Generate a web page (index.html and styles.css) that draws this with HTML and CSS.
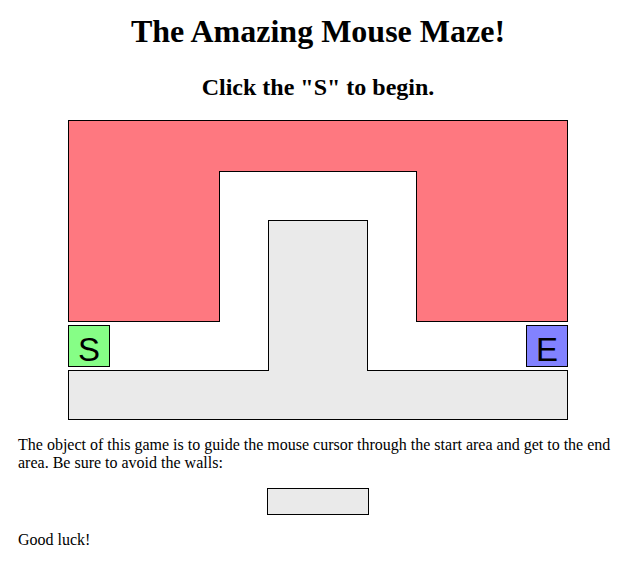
FILE: index.html
```html
<!DOCTYPE html>
<html lang="en">
<head>
<meta charset="utf-8">
<title>The Amazing Mouse Maze!</title>
<link rel="stylesheet" href="styles.css">
</head>
<body>
<h1 class="title">The Amazing Mouse Maze!</h1>
<h2 class="subtitle">Click the "S" to begin.</h2>
<div class="maze">
  <div class="wall wall-left youlose"></div>
  <div class="wall wall-right youlose"></div>
  <div class="wall wall-top youlose"></div>
  <div class="wall floor"></div>
  <div class="wall pillar"></div>
  <div class="marker start">S</div>
  <div class="marker end">E</div>
</div>
<p class="text">The object of this game is to guide the mouse cursor through the start area and get to the end area. Be sure to avoid the walls:</p>
<div class="example-wall"></div>
<p class="text">Good luck!</p>
</body>
</html>
```
FILE: styles.css
```css
body {
  margin: 0;
  padding: 0 18px;
  font-family: "Liberation Serif", "Times New Roman", serif;
  color: #000;
  background: #fff;
}

.title {
  text-align: center;
  font-size: 32px;
  margin: 13px 0 24px;
}

.subtitle {
  text-align: center;
  font-size: 24px;
  margin: 0 0 19px;
}

.maze {
  position: relative;
  width: 500px;
  height: 300px;
  margin: 0 auto;
}

.wall {
  position: absolute;
  border: 1px solid #000;
  background-color: #eaeaea;
}

.wall.youlose {
  background-color: #fe7880;
}

.wall-left {
  left: 0;
  top: 0;
  width: 150px;
  height: 200px;
}

.wall-right {
  left: 348px;
  top: 0;
  width: 150px;
  height: 200px;
}

.wall-top {
  left: 151px;
  top: 0;
  width: 198px;
  height: 50px;
  border-left: none;
  border-right: none;
}

.floor {
  left: 0;
  top: 250px;
  width: 498px;
  height: 48px;
}

.pillar {
  left: 200px;
  top: 100px;
  width: 98px;
  height: 150px;
  border-bottom: none;
}

.marker {
  position: absolute;
  top: 205px;
  width: 40px;
  height: 40px;
  border: 1px solid #000;
  font-family: "Liberation Sans", Arial, sans-serif;
  font-size: 33px;
  line-height: 48px;
  text-align: center;
  overflow: visible;
}

.start {
  left: 0;
  background-color: #86fe86;
}

.end {
  left: 458px;
  background-color: #8282ff;
}

.text {
  font-size: 16px;
  margin: 16px 0;
}

.example-wall {
  width: 100px;
  height: 25px;
  margin: 0 auto;
  border: 1px solid #000;
  background-color: #eaeaea;
}
```
